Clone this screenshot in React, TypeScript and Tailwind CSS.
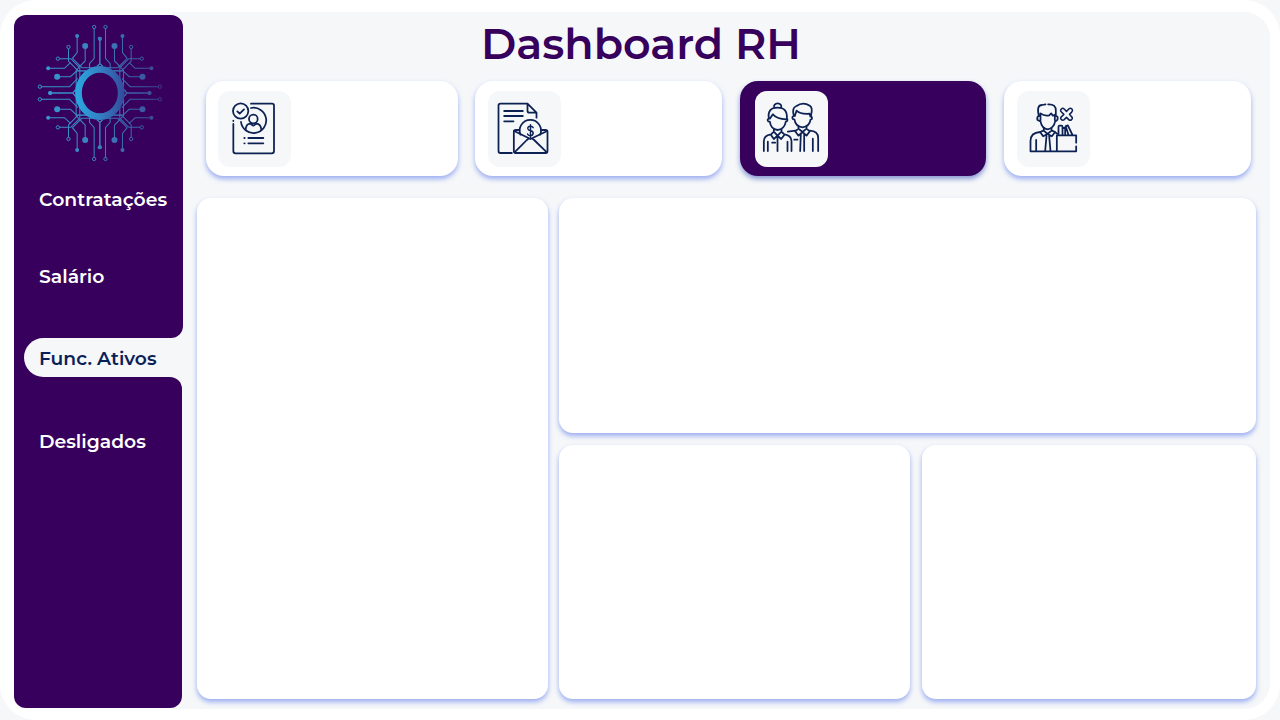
import type { ReactNode } from 'react';

const traces = [
  'M17 -194V-104L31 -88V-74',
  'M0 -163V-88L9 -80M0 -88L-9 -80',
  'M44 -141V-96L60 -80V-36',
  'M68 -171V-121L82 -104L54 -76H0',
  'M94 -133V-96L66 -67H40',
  'M121 -103H87L62 -78L71 -68V0',
  'M155 -74H106L88 -91',
  'M128 -49H88L70 -66H40',
  'M176 -19H91L66 -44',
  'M149 0H81L73 -10M81 0L73 10',
];
const openNodes = [[17, -198], [94, -138], [126, -103], [180, -19]];
const solidNodes = [[0, -163, 6], [68, -171, 6], [44, -141, 9], [155, -74, 6], [128, -49, 9], [149, 0, 6]];
const mirrors = ['scale(1 1)', 'scale(-1 1)', 'scale(1 -1)', 'scale(-1 -1)'];

function Quadrants({ transforms, color }: { transforms: string[]; color: string[] }) {
  return (
    <>
      {transforms.map((t, i) => (
        <g key={t} transform={t} stroke={color[i]} fill="none" strokeWidth="3.2">
          {traces.map((d) => (
            <path key={d} d={d} />
          ))}
          {openNodes.map(([x, y]) => (
            <circle key={`${x}${y}`} cx={x} cy={y} r="5" strokeWidth="3" />
          ))}
          {solidNodes.map(([x, y, r]) => (
            <circle key={`${x}${y}`} cx={x} cy={y} r={r} fill={color[i]} stroke="none" />
          ))}
        </g>
      ))}
    </>
  );
}

function Logo() {
  return (
    <svg className="block h-[144px] w-[132px]" viewBox="-197.5 -216 396 432">
      <defs>
        <linearGradient id="ring" x1="-73" y1="0" x2="73" y2="0" gradientUnits="userSpaceOnUse">
          <stop offset="0" stopColor="#2ba8df" />
          <stop offset="0.5" stopColor="#3480c4" />
          <stop offset="1" stopColor="#344a9c" />
        </linearGradient>
        <linearGradient id="right" x1="0" y1="0" x2="180" y2="0" gradientUnits="userSpaceOnUse">
          <stop offset="0" stopColor="#3b7cba" />
          <stop offset="0.7" stopColor="#3c5ba4" />
          <stop offset="1" stopColor="#3f3c88" />
        </linearGradient>
        <linearGradient id="left" x1="0" y1="0" x2="180" y2="0" gradientUnits="userSpaceOnUse">
          <stop offset="0" stopColor="#3b7cba" />
          <stop offset="1" stopColor="#369bd0" />
        </linearGradient>
      </defs>
      <Quadrants transforms={mirrors} color={['url(#right)', 'url(#left)', 'url(#right)', 'url(#left)']} />
      <ellipse rx="64" ry="71" fill="#36005c" stroke="url(#ring)" strokeWidth="20" />
    </svg>
  );
}

function Icon({ viewBox, children }: { viewBox: string; children: ReactNode }) {
  return (
    <svg
      className="block h-full w-full"
      viewBox={viewBox}
      preserveAspectRatio="none"
      fill="none"
      stroke="#0d2152"
      strokeWidth="5.3"
      strokeLinecap="round"
      strokeLinejoin="round"
    >
      {children}
    </svg>
  );
}

function HiringIcon() {
  return (
    <Icon viewBox="54 63 219 228">
      <circle cx="122" cy="123" r="23" />
      <path d="M112 124L119 131L132 118" />
      <path d="M153 101H216Q222 101 222 107V243Q222 250 215 250H107Q100 250 100 243V162M100 152V153" />
      <path d="M153 114A38 38 0 1 1 123 156" />
      <circle cx="160" cy="147" r="13" />
      <path d="M137 180Q138 161 151 161L160 167L169 161Q183 162 184 180" />
      <path d="M133 204H134M145 204H190M133 220H134M145 220H190" />
    </Icon>
  );
}

function SalaryIcon() {
  return (
    <Icon viewBox="54.5 63 219 228">
      <path d="M126 249H92Q86 249 86 243V107Q86 101 92 101H173L200 128V143M173 101V122Q173 128 179 128H200" />
      <path d="M103 123H159M103 138H159M103 154H131" />
      <path d="M152 194A32 32 0 1 1 211 194" />
      <path d="M148 180H138Q132 180 132 186V243Q132 249 138 249H227Q233 249 233 243V186Q233 180 227 180H217" />
      <path d="M133 183L182 207L232 183M134 247L171 210Q182 200 193 210L231 247" />
      <path d="M190 173Q187 168 181 169Q173 170 174 176Q175 181 182 182Q190 183 190 190Q189 197 181 197Q175 197 173 192M182 164V202" strokeWidth="4.4" />
    </Icon>
  );
}

function StaffIcon() {
  return (
    <Icon viewBox="59.5 63 219 228">
      <path d="M117 112A11 9 0 1 1 138 112M101 146Q96 113 127 113Q158 113 155 146M101 146Q95 148 99 154L104 155Q107 178 127 180Q148 178 152 155Q159 154 156 146M104 146L113 133Q126 147 153 148" />
      <path d="M116 178V185L127 197L139 185V178M116 185L107 194L116 207L127 197L138 207L148 194L139 185M107 193Q86 196 86 214V243M148 193Q169 196 169 214V243M98 215V243M157 215V243M127 197V243M111 218H120" />
      <path d="M176 138Q169 113 184 108Q203 94 224 107Q234 113 227 138M176 138Q169 139 173 147L178 149Q181 170 202 172Q223 170 226 149Q234 148 228 138M179 138L184 122Q195 133 223 131L226 140" />
      <path d="M190 169V176L202 186L214 176V169M190 176L180 184L190 197L202 186L214 197L224 184L214 176M181 182L158 185M224 182Q249 183 249 204V243M233 206V243M197 192L195 243M207 192V243M177 209H187" />
    </Icon>
  );
}

function DismissedIcon() {
  return (
    <Icon viewBox="66.5 63 219 228">
      <path d="M132 137Q124 105 142 105L152 103M160 103Q185 102 183 124V137M132 137Q125 141 128 150L137 154Q141 176 159 178Q177 174 181 154Q191 150 188 140L183 137M137 139V130Q149 139 163 136L169 130L174 137L180 134V150M132 137L137 139V151" />
      <path d="M147 174V182L158 192L170 182V174M147 181L136 186L145 199L158 192L171 199L181 186L170 181M136 186Q107 188 107 213V244H244V229M124 210V243M155 198L151 243M163 198L167 243M181 187L187 191" />
      <path d="M186 243V196H244V218M191 195V170Q191 167 194 167H200Q203 167 203 170V195M203 174H211V195M212 169L219 166L233 195M214 173L221 195" />
      <path d="M199 118Q203 112 208 117L215 124L222 117Q227 112 232 118Q235 122 230 127L224 133L230 140Q235 145 230 149Q226 153 221 148L215 142L208 149Q203 153 199 148Q195 144 201 139L207 133L200 126Q195 122 199 118Z" strokeWidth="4.6" />
    </Icon>
  );
}

const shadow = 'shadow-[0_3px_5px_rgba(96,125,235,0.6)]';

function MetricCard({ className, children }: { className: string; children: ReactNode }) {
  return (
    <div className={`flex h-[95px] items-start rounded-[18px] pt-2.5 ${className}`}>
      <div className="h-[76px] w-[73px] rounded-xl bg-[#f5f7f9]">{children}</div>
    </div>
  );
}

function Panel({ className }: { className: string }) {
  return <section className={`rounded-[14px] bg-white ${shadow} ${className}`} />;
}

export default function App() {
  return (
    <div className="h-[720px] w-[1280px] overflow-hidden bg-[#f5f7f9] font-['Montserrat','Inter',sans-serif]">
      <div className="flex h-full rounded-[36px] bg-white pb-[11px] pl-3.5 pr-2.5 pt-3">
        <aside className="relative z-10 mt-[3px] flex h-[693px] w-[169px] flex-col text-[18.8px] font-semibold leading-6 text-white">
          <div className="flex h-[323px] flex-col items-start rounded-t-xl rounded-br-xl bg-[#36005c] pl-[25px] pt-[6px]">
            <div className="-ml-[5px]">
              <Logo />
            </div>
            <a className="mt-[23px] whitespace-nowrap tracking-[0.03px]">Contratações</a>
            <a className="mt-[53px] whitespace-nowrap">Salário</a>
          </div>
          <div className="h-[39px] bg-gradient-to-r from-[#36005c] from-50% to-[#f5f7f9] to-50% pl-2.5">
            <div className="flex h-full items-center rounded-l-full bg-[#f5f7f9] pl-[15px] pt-[3px] text-[18.7px] text-[#0a2158]">
              <a className="whitespace-nowrap">Func. Ativos</a>
            </div>
          </div>
          <div className="flex w-[168px] flex-1 flex-col items-start rounded-b-xl rounded-tr-xl bg-[#36005c] pl-[25px] pt-[53px]">
            <a className="whitespace-nowrap">Desligados</a>
          </div>
        </aside>
        <main className="-ml-[11px] flex flex-1 flex-col rounded-r-[26px] bg-[#f5f7f9] pl-[25px] pr-3.5">
          <header className="flex h-[69px] items-center pb-[5px] pl-[284px]">
            <h1 className="whitespace-nowrap text-[42.8px] font-semibold leading-none text-[#36005c]">Dashboard RH</h1>
          </header>
          <div className="ml-[9px] flex">
            <MetricCard className="w-[252px] bg-white pl-3 shadow-[0_3px_5px_rgba(96,125,235,0.6)]"><HiringIcon /></MetricCard>
            <MetricCard className="ml-[17px] w-[247px] bg-white pl-[13px] shadow-[0_3px_5px_rgba(96,125,235,0.6)]"><SalaryIcon /></MetricCard>
            <MetricCard className="ml-[18px] w-[246px] bg-[#36005c] pl-[15px] shadow-[0_3px_5px_rgba(75,100,190,0.65)]"><StaffIcon /></MetricCard>
            <MetricCard className="ml-[18px] w-[247px] bg-white pl-[13px] shadow-[0_3px_5px_rgba(96,125,235,0.6)]"><DismissedIcon /></MetricCard>
          </div>
          <div className="mt-[22px] flex h-[501px] gap-[11px]">
            <Panel className="w-[351px]" />
            <div className="flex w-[697px] flex-col gap-3">
              <Panel className="h-[235px]" />
              <div className="flex h-[254px] gap-3">
                <Panel className="w-[351px]" />
                <Panel className="w-[334px]" />
              </div>
            </div>
          </div>
        </main>
      </div>
    </div>
  );
}
